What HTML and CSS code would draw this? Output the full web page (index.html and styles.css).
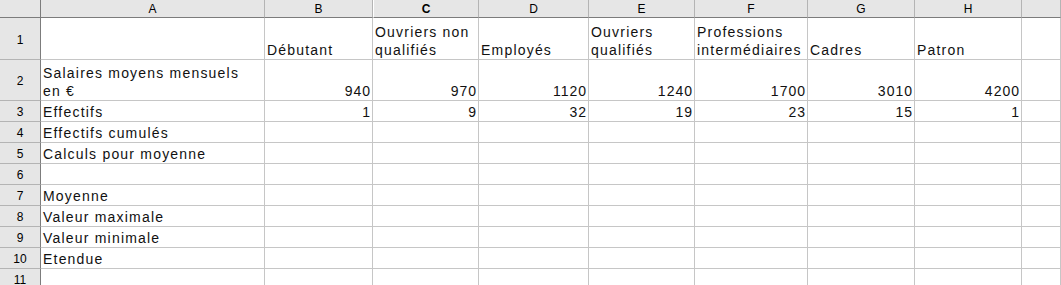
FILE: index.html
```html
<!DOCTYPE html>
<html lang="fr">
<head>
  <meta charset="UTF-8">
  <title>Salaires</title>
  <link rel="stylesheet" href="styles.css">
</head>
<body>

  <div class="sheet">
    <div class="corner"></div>
    <div class="colhead">A</div>
    <div class="colhead">B</div>
    <div class="colhead current">C</div>
    <div class="colhead">D</div>
    <div class="colhead">E</div>
    <div class="colhead">F</div>
    <div class="colhead">G</div>
    <div class="colhead">H</div>
    <div class="colhead"></div>

    <div class="rowhead">1</div>
    <div class="cell"></div>
    <div class="cell">Débutant</div>
    <div class="cell">Ouvriers non<br>qualifiés</div>
    <div class="cell">Employés</div>
    <div class="cell">Ouvriers<br>qualifiés</div>
    <div class="cell">Professions<br>intermédiaires</div>
    <div class="cell">Cadres</div>
    <div class="cell">Patron</div>
    <div class="cell"></div>

    <div class="rowhead">2</div>
    <div class="cell">Salaires moyens mensuels<br>en €</div>
    <div class="cell num">940</div>
    <div class="cell num">970</div>
    <div class="cell num">1120</div>
    <div class="cell num">1240</div>
    <div class="cell num">1700</div>
    <div class="cell num">3010</div>
    <div class="cell num">4200</div>
    <div class="cell"></div>

    <div class="rowhead">3</div>
    <div class="cell">Effectifs</div>
    <div class="cell num">1</div>
    <div class="cell num">9</div>
    <div class="cell num">32</div>
    <div class="cell num">19</div>
    <div class="cell num">23</div>
    <div class="cell num">15</div>
    <div class="cell num">1</div>
    <div class="cell"></div>

    <div class="rowhead">4</div>
    <div class="cell">Effectifs cumulés</div>
    <div class="cell"></div><div class="cell"></div><div class="cell"></div><div class="cell"></div>
    <div class="cell"></div><div class="cell"></div><div class="cell"></div><div class="cell"></div>

    <div class="rowhead">5</div>
    <div class="cell">Calculs pour moyenne</div>
    <div class="cell"></div><div class="cell"></div><div class="cell"></div><div class="cell"></div>
    <div class="cell"></div><div class="cell"></div><div class="cell"></div><div class="cell"></div>

    <div class="rowhead">6</div>
    <div class="cell"></div>
    <div class="cell"></div><div class="cell"></div><div class="cell"></div><div class="cell"></div>
    <div class="cell"></div><div class="cell"></div><div class="cell"></div><div class="cell"></div>

    <div class="rowhead">7</div>
    <div class="cell">Moyenne</div>
    <div class="cell"></div><div class="cell"></div><div class="cell"></div><div class="cell"></div>
    <div class="cell"></div><div class="cell"></div><div class="cell"></div><div class="cell"></div>

    <div class="rowhead">8</div>
    <div class="cell">Valeur maximale</div>
    <div class="cell"></div><div class="cell"></div><div class="cell"></div><div class="cell"></div>
    <div class="cell"></div><div class="cell"></div><div class="cell"></div><div class="cell"></div>

    <div class="rowhead">9</div>
    <div class="cell">Valeur minimale</div>
    <div class="cell"></div><div class="cell"></div><div class="cell"></div><div class="cell"></div>
    <div class="cell"></div><div class="cell"></div><div class="cell"></div><div class="cell"></div>

    <div class="rowhead">10</div>
    <div class="cell">Etendue</div>
    <div class="cell"></div><div class="cell"></div><div class="cell"></div><div class="cell"></div>
    <div class="cell"></div><div class="cell"></div><div class="cell"></div><div class="cell"></div>

    <div class="rowhead">11</div>
    <div class="cell"></div>
    <div class="cell"></div><div class="cell"></div><div class="cell"></div><div class="cell"></div>
    <div class="cell"></div><div class="cell"></div><div class="cell"></div><div class="cell"></div>
  </div>

</body>
</html>
```

FILE: styles.css
```css
:root {
  --grid: #c6c6c6;
  --head: #e6e6e6;
  --head-line: #b4b4b4;
  --head-edge: #7c7c7c;
}
* { box-sizing: border-box; margin: 0; padding: 0; }
body {
  background: #fff;
  color: #000;
  font-family: "Liberation Sans", Arial, sans-serif;
  overflow: hidden;
}

.sheet {
  display: grid;
  grid-template-columns: 41px 224px 108px 106px 110px 106px 113px 107px 107px 1fr;
  grid-template-rows: 18px 42px 41px repeat(9, 21px);
  width: 1061px;
}

.corner,
.colhead,
.rowhead {
  background: var(--head);
  font-size: 12px;
  display: flex;
  align-items: center;
  justify-content: center;
}
.corner {
  border-right: 1px solid var(--head-edge);
  border-bottom: 1px solid var(--head-edge);
}
.colhead {
  border-right: 1px solid var(--head-line);
  border-bottom: 1px solid var(--head-edge);
  padding-top: 1px;
}
.colhead.current {
  border-left: 1px solid #fff;
  font-weight: bold;
}
.rowhead {
  border-right: 1px solid var(--head-edge);
  border-bottom: 1px solid var(--head-line);
  padding-top: 2px;
}

.cell {
  border-right: 1px solid var(--grid);
  border-bottom: 1px solid var(--grid);
  display: flex;
  align-items: flex-end;
  padding: 0 1px 0 2px;
  font-size: 14px;
  letter-spacing: 1.2px;
  line-height: 18px;
  color: #111;
  white-space: nowrap;
  overflow: hidden;
}
.cell.num {
  justify-content: flex-end;
  padding-right: 1px;
  letter-spacing: 1px;
}
```
